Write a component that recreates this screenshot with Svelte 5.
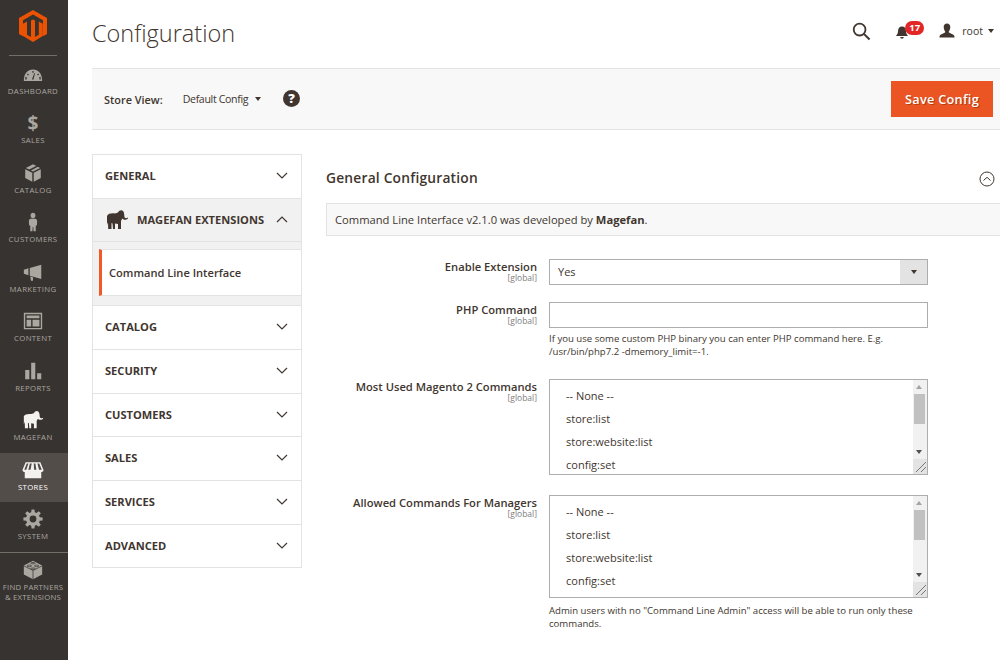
<script lang="ts">
    const elephant =
        'M2 8C3 5.500 7 5 10 5.500L13 4.500C14 2.500 16.500 1.500 18 3 19.500 4.500 19 7 19.500 9 20 10.500 21.500 10.500 23 9.500V10.500C21 12.500 18.500 12 17.500 10.500L16.500 12 16 13V21H13V16L10 15.500V21H8L7.500 15.500 6.500 15V21H3.200L3 14 2 17z';

    function gearPath() {
        let d = '';
        const teeth = 8;
        for (let i = 0; i < teeth; i++) {
            const a = (i / teeth) * Math.PI * 2;
            const pts = [
                [-0.26, 7.6],
                [-0.15, 10.6],
                [0.15, 10.6],
                [0.26, 7.6],
            ];
            for (const [off, r] of pts) {
                const x = 12 + Math.cos(a + off) * r;
                const y = 12 + Math.sin(a + off) * r;
                d += (d ? 'L' : 'M') + x.toFixed(2) + ' ' + y.toFixed(2);
            }
        }
        return d + 'zM12 8.300a3.700 3.700 0 1 0 0 7.400 3.700 3.700 0 0 0 0-7.400z';
    }

    const nav = [
        { label: 'Dashboard', box: '0 -2 24 24', d: 'M12 5C6 5 2 9.500 2 17.500h20C22 9.500 18 5 12 5zM5 16H3.500c0-1 .1-2 .4-3l1.300.5zM6.500 11.500 5.400 10.600l1-1.100 1.100 1.200zM12.500 16h-1.700l2.700-7.200.7.300zM12.700 8.500h-1.400V6.700h1.400zM17.500 11.500l-1-1 1.100-1.100 1 1.100zM20.500 16H19l-.2-2.500 1.300-.5c.3 1 .4 2 .4 3z' },
        { label: 'Sales', glyph: '$' },
        { label: 'Catalog', d: 'M12 2.500 19.800 6.500 12 10.300 9.800 9.200 17.200 5.300 15.300 4.400 7.900 8.300 4.200 6.500zM3.500 7.800 11.200 11.700V21.500L3.500 17.500zM20.500 7.800V17.500L12.800 21.500V11.700z' },
        { label: 'Customers', d: 'M12 2c1.600 0 2.700 1.300 2.700 3s-1.100 3-2.700 3-2.700-1.300-2.700-3 1.100-3 2.700-3zM9 8.500h6c1 .5 1.500 1.500 1.500 3l-.2 4-1.300.5v6h-2.400l-.3-4.500h-.6l-.3 4.500H9v-6l-1.300-.5-.2-4c0-1.500.5-2.500 1.500-3z' },
        { label: 'Marketing', d: 'M8.500 7.500 21 4v15.500L8.500 16zM2 9.500 7 8v7.500l-5-1.500zM9 16.800l3 .8v3.900H9.800z' },
        { label: 'Content', d: 'M2 3h20v18H2zM3.500 4.500v15h17v-15zM5 6h14v3H5zM5 10.500h5V18H5zM11.500 10.500H19V18h-7.500z' },
        { label: 'Reports', d: 'M3.500 11H8v10H3.500zM10 3h4.500v18H10zM16.500 14.500H21V21h-4.500z' },
        { label: 'Magefan', d: elephant, bright: true },
        { label: 'Stores', d: 'M4 3.500h16l3.500 8.500c-.2 1.500-1.200 2.300-2.500 2.300V21H3v-6.700c-1.300 0-2.300-.8-2.500-2.300zM5.200 5 2.500 11.800h2.200L7 5zM8.600 5l-1.700 6.800h2.400L10.600 5zM12.800 5l.4 6.800h2.500L14.600 5zM16.800 5l1.800 6.800h3L18.800 5z', bright: true, active: true },
        { label: 'System', d: gearPath() },
    ];

    const sections = ['Catalog', 'Security', 'Customers', 'Sales', 'Services', 'Advanced'];
    const commands = ['-- None --', 'store:list', 'store:website:list', 'config:set'];
</script>

{#snippet chevron(up = false)}
    <svg class="chevron" viewBox="0 0 12 7" width="12" height="7">
        <path d={up ? 'M1 6l5-5 5 5' : 'M1 1l5 5 5-5'} fill="none" stroke="#41362f" stroke-width="1.200" />
    </svg>
{/snippet}

{#snippet listbox(tall = false)}
    <div class="listbox" class:tall>
        <ul>
            {#each commands as c}
                <li>{c}</li>
            {/each}
        </ul>
        <div class="scrollbar">
            <span class="arrow up"></span>
            <span class="thumb"></span>
            <span class="arrow down"></span>
            <span class="grip">
                <svg viewBox="0 0 14 14" width="14" height="14">
                    <path d="M3 13 13 3M8 13l5-5" stroke="#777" stroke-width="1" fill="none" />
                </svg>
            </span>
        </div>
    </div>
{/snippet}

<div class="admin">
    <aside class="sidebar">
        <div class="logo">
            <svg viewBox="0 0 28 32" width="28" height="32">
                <path
                    fill="#eb5202"
                    d="M14 0 28 8v16l-4 2.300V10.300L14 4.600 4 10.300v16L0 24V8zM12 10.500l2-1.100 2 1.100V27l3.800-2.200V11.500l4 2.300V26L14 32 4 26V13.800l4-2.300v13.300L12 27z"
                />
            </svg>
        </div>
        <nav>
            {#each nav as item}
                <a class="nav-item" class:active={item.active} class:bright={item.bright}>
                    <span class="nav-icon">
                        {#if item.glyph}
                            <b class="glyph">{item.glyph}</b>
                        {:else}
                            <svg viewBox={item.box ?? '0 0 24 24'} width="22" height="22">
                                <path d={item.d} fill-rule="evenodd" />
                            </svg>
                        {/if}
                    </span>
                    <span class="nav-label">{item.label}</span>
                </a>
            {/each}
            <a class="nav-item partners">
                <span class="nav-icon">
                    <svg viewBox="0 0 24 24" width="22" height="22">
                        <path d="M12 2 22 7v10l-10 5-10-5V7z" />
                        <path
                            class="cuts"
                            d="M2 7.500 12 12.500 22 7.500M12 12.500V22M5.500 7.500c0-1.200 5-1.200 5 0s-5 1.200-5 0zM13.500 7.500c0-1.200 5-1.200 5 0s-5 1.200-5 0zM9.500 4.500c0-1 5-1 5 0s-5 1-5 0zM9.500 10.500c0-1 5-1 5 0s-5 1-5 0z"
                        />
                    </svg>
                </span>
                <span class="nav-label">Find Partners<br />&amp; Extensions</span>
            </a>
        </nav>
    </aside>

    <main class="page">
        <header class="page-header">
            <h1>Configuration</h1>
            <div class="tools">
                <svg class="search" viewBox="0 0 20 20" width="19" height="19">
                    <circle cx="8" cy="8" r="6.200" fill="none" stroke="#41362f" stroke-width="1.900" />
                    <path d="M12.500 12.500 18.500 18.500" stroke="#41362f" stroke-width="2.200" />
                </svg>
                <span class="bell">
                    <svg viewBox="0 0 16 16" width="14" height="15">
                        <path
                            fill="#41362f"
                            d="M8 1c3 0 4.500 2.300 4.500 5 0 3 1 4.500 2.500 6H1c1.500-1.500 2.500-3 2.500-6C3.500 3.300 5 1 8 1zM6 13.200h4c0 1.200-.9 2-2 2s-2-.8-2-2z"
                        />
                    </svg>
                    <span class="badge">17</span>
                </span>
                <span class="user">
                    <svg viewBox="0 0 16 16" width="16" height="16">
                        <path
                            fill="#41362f"
                            d="M8 .5c2 0 3.300 1.500 3.300 3.500S10.200 8 9.700 9c0 1.200 5.300 1.800 5.800 4.500v1H.5v-1C1 10.800 6.300 10.200 6.300 9 5.800 8 4.700 6 4.700 4S6 .5 8 .5z"
                        />
                    </svg>
                    <span>root</span>
                    <i class="caret"></i>
                </span>
            </div>
        </header>

        <div class="actions">
            <div class="store-view">
                <strong>Store View:</strong>
                <span class="scope">Default Config</span>
                <i class="caret"></i>
                <span class="help">?</span>
            </div>
            <button class="save">Save Config</button>
        </div>

        <div class="columns">
            <div class="tabs">
                <div class="tab">General {@render chevron()}</div>
                <div class="tab open">
                    <svg class="tab-elephant" viewBox="0 0 24 24" width="24" height="24">
                        <path d={elephant} fill="#41362f" />
                    </svg>
                    <span class="tab-name">Magefan Extensions</span>
                    {@render chevron(true)}
                </div>
                <div class="sub">
                    <a class="sub-item">Command Line Interface</a>
                </div>
                {#each sections as s}
                    <div class="tab">{s} {@render chevron()}</div>
                {/each}
            </div>

            <section class="config">
                <div class="config-title">
                    <h2>General Configuration</h2>
                    <svg viewBox="0 0 16 16" width="16" height="16">
                        <circle cx="8" cy="8" r="7" fill="none" stroke="#41362f" stroke-width="1" />
                        <path d="M4.500 9.500 8 6.300l3.500 3.200" fill="none" stroke="#41362f" stroke-width="1" />
                    </svg>
                </div>
                <div class="notice">Command Line Interface v2.1.0 was developed by <strong>Magefan</strong>.</div>

                <div class="rows">
                    <div class="row first">
                        <label>Enable Extension<small>[global]</small></label>
                        <div class="control">
                            <div class="select">
                                <span>Yes</span>
                                <span class="select-btn"><i class="caret"></i></span>
                            </div>
                        </div>
                    </div>
                    <div class="row second">
                        <label>PHP Command<small>[global]</small></label>
                        <div class="control">
                            <div class="input"></div>
                            <p class="note">
                                If you use some custom PHP binary you can enter PHP command here. E.g.<br />
                                /usr/bin/php7.2 -dmemory_limit=-1.
                            </p>
                        </div>
                    </div>
                    <div class="row third">
                        <label>Most Used Magento 2 Commands<small>[global]</small></label>
                        <div class="control">{@render listbox()}</div>
                    </div>
                    <div class="row fourth">
                        <label>Allowed Commands For Managers<small>[global]</small></label>
                        <div class="control">
                            {@render listbox(true)}
                            <p class="note last">
                                Admin users with no "Command Line Admin" access will be able to run only these<br />
                                commands.
                            </p>
                        </div>
                    </div>
                </div>
            </section>
        </div>
    </main>
</div>

<style>
    :global(body) {
        margin: 0;
        background: #fff;
        font-family: 'Open Sans', sans-serif;
        color: #41362f;
    }

    .admin {
        display: flex;
        width: 1000px;
        height: 660px;
        overflow: hidden;
    }

    .sidebar {
        flex: 0 0 68px;
        background: #373330;
    }

    .logo {
        height: 56px;
        box-sizing: border-box;
        padding-top: 10px;
        display: flex;
        justify-content: center;
        margin: 0 11px 0 9px;
        border-bottom: 1px solid #736d68;
    }

    .nav-item {
        display: flex;
        flex-direction: column;
        align-items: center;
        height: 49.500px;
        box-sizing: border-box;
        padding: 6px 2px 0 0;
        color: #aaa6a0;
    }

    nav {
        margin-top: 0.600px;
    }

    .nav-item.active {
        background: #524d49;
        color: #fff;
    }

    .nav-icon {
        height: 22px;
        display: flex;
        align-items: center;
        justify-content: center;
        margin-bottom: 1px;
    }

    .nav-icon svg {
        fill: #aaa6a0;
    }

    .nav-icon .cuts {
        fill: none;
        stroke: #373330;
        stroke-width: 0.800px;
    }

    .nav-item.bright .nav-icon svg {
        fill: #f4f2ee;
    }

    .glyph {
        font-size: 19px;
        line-height: 22px;
        font-weight: 700;
    }

    .nav-label {
        font-size: 7.800px;
        line-height: 10px;
        letter-spacing: 0.350px;
        text-transform: uppercase;
        text-align: center;
        white-space: nowrap;
    }

    .partners {
        border-top: 1px solid #736d68;
        height: 60px;
        padding-top: 6px;
    }

    .partners .nav-label {
        letter-spacing: 0.200px;
    }

    .page {
        flex: 1;
        min-width: 0;
        padding-left: 24px;
    }

    .page-header {
        height: 68px;
        display: flex;
        justify-content: space-between;
        align-items: center;
    }

    h1 {
        margin: 0 0 2px;
        font-size: 23.500px;
        font-weight: 300;
    }

    .tools {
        display: flex;
        align-items: center;
        padding: 0 6px 6px 0;
        font-size: 10.500px;
    }

    .search {
        margin-right: 24px;
    }

    .bell {
        position: relative;
        display: flex;
        top: 1px;
        margin-right: 30px;
    }

    .badge {
        position: absolute;
        left: 10px;
        top: -4px;
        background: #e22626;
        color: #fff;
        font-size: 9.500px;
        font-weight: 700;
        line-height: 14px;
        padding: 0 4px;
        border-radius: 7px;
    }

    .user {
        display: flex;
        align-items: center;
        gap: 5px;
    }

    .user svg {
        margin-right: 2px;
    }

    .caret {
        display: inline-block;
        width: 0;
        height: 0;
        border-left: 3.500px solid transparent;
        border-right: 3.500px solid transparent;
        border-top: 4px solid #41362f;
    }

    .actions {
        height: 62px;
        box-sizing: border-box;
        background: #f8f8f8;
        border-top: 1px solid #e3e3e3;
        border-bottom: 1px solid #e3e3e3;
        display: flex;
        align-items: center;
        justify-content: space-between;
        padding: 0 7px 0 12px;
    }

    .store-view {
        display: flex;
        align-items: center;
        font-size: 10.900px;
    }

    .store-view strong {
        font-weight: 600;
        margin-right: 20px;
    }

    .scope {
        font-size: 10.600px;
        letter-spacing: -0.350px;
        margin-right: 7px;
    }

    .help {
        width: 17px;
        height: 17px;
        margin-left: 22px;
        margin-top: -1px;
        background: #41362f;
        color: #fff;
        border-radius: 50%;
        font-size: 13px;
        font-weight: 800;
        line-height: 17px;
        text-align: center;
    }

    .save {
        width: 102px;
        height: 36px;
        border: 0;
        background: #eb5423;
        color: #fff;
        font: 600 12.700px 'Open Sans', sans-serif;
        letter-spacing: 0.300px;
        text-shadow: 1px 1px 0 #b5400f;
    }

    .columns {
        display: grid;
        grid-template-columns: 210px 1fr;
        column-gap: 24px;
        padding-top: 24px;
    }

    .tabs {
        border: 1px solid #e3e3e3;
        height: 414px;
        box-sizing: border-box;
    }

    .tab {
        display: flex;
        align-items: center;
        justify-content: space-between;
        height: 43.700px;
        box-sizing: border-box;
        padding: 0 13px 2px 12px;
        border-bottom: 1px solid #e3e3e3;
        font-size: 11.100px;
        font-weight: 700;
        text-transform: uppercase;
        color: #41362f;
    }

    .tab:last-child {
        border-bottom: 0;
    }

    .chevron {
        flex: none;
    }

    .tab.open {
        background: #f1f1f1;
        justify-content: flex-start;
    }

    .tab-elephant {
        margin: 2px 8px 0 0;
    }

    .tab-name {
        flex: 1;
        white-space: nowrap;
    }

    .sub {
        background: #f1f1f1;
        padding: 7px 0 9px 6px;
        border-bottom: 1px solid #e3e3e3;
    }

    .sub-item {
        display: block;
        height: 47px;
        box-sizing: border-box;
        padding-left: 7px;
        background: #fff;
        border-left: 3px solid #ef5a27;
        border-top: 1px solid #e3e3e3;
        border-bottom: 1px solid #e3e3e3;
        font-size: 11.100px;
        font-weight: 600;
        line-height: 45px;
        color: #41362f;
    }

    .config {
        min-width: 0;
    }

    .config-title {
        display: flex;
        justify-content: space-between;
        align-items: center;
        height: 49px;
        padding-right: 5px;
    }

    h2 {
        margin: 0 0 2px;
        font-size: 13.800px;
        font-weight: 600;
        letter-spacing: 0.200px;
    }

    .notice {
        height: 33px;
        box-sizing: border-box;
        background: #f8f8f8;
        border: 1px solid #e3e3e3;
        border-right: 0;
        padding-left: 8px;
        font-size: 11.200px;
        line-height: 31px;
    }

    .notice strong {
        font-weight: 700;
    }

    .rows {
        padding-top: 23px;
    }

    .row {
        display: grid;
        grid-template-columns: 211px 380px;
        column-gap: 12px;
    }

    .second {
        margin-top: 17px;
    }

    .third {
        margin-top: 21px;
    }

    .fourth {
        margin-top: 20px;
    }

    label {
        font-size: 11.200px;
        font-weight: 600;
        line-height: 14px;
        text-align: right;
        padding-top: 1px;
        white-space: nowrap;
    }

    small {
        display: block;
        font-size: 8.500px;
        line-height: 7px;
        font-weight: 400;
        color: #808080;
    }

    .select,
    .input,
    .listbox {
        box-sizing: border-box;
        width: 379px;
        background: #fff;
        border: 1px solid #adadad;
    }

    .select {
        height: 26px;
        display: flex;
        justify-content: space-between;
        align-items: center;
        padding-left: 8px;
        font-size: 11px;
    }

    .select > span:first-child {
        margin-top: -2px;
    }

    .select-btn {
        width: 27px;
        height: 24px;
        background: #e3e3e3;
        display: flex;
        align-items: center;
        justify-content: center;
    }

    .input {
        height: 26px;
    }

    .note {
        margin: 4px 0 0;
        font-size: 9.600px;
        line-height: 13px;
    }

    .note.last {
        margin-top: 6px;
    }

    .listbox {
        height: 96px;
        display: flex;
        justify-content: space-between;
        overflow: hidden;
    }

    .listbox.tall {
        height: 103px;
    }

    ul {
        list-style: none;
        margin: 0;
        padding: 4px 0 0 16px;
        font-size: 11px;
    }

    li {
        height: 23px;
        line-height: 23px;
    }

    .scrollbar {
        position: relative;
        width: 14px;
        background: #f1f1f1;
    }

    .thumb {
        position: absolute;
        left: 1px;
        top: 14px;
        width: 11px;
        height: 30px;
        background: #c1c1c1;
    }

    .arrow {
        position: absolute;
        left: 3px;
        width: 0;
        height: 0;
        border-left: 3.500px solid transparent;
        border-right: 3.500px solid transparent;
    }

    .arrow.up {
        top: 5px;
        border-bottom: 4px solid #a3a3a3;
    }

    .arrow.down {
        bottom: 20px;
        border-top: 4px solid #505050;
    }

    .grip {
        position: absolute;
        right: 0;
        bottom: 0;
        width: 14px;
        height: 15px;
        background: #e3e3e3;
        line-height: 0;
    }
</style>
